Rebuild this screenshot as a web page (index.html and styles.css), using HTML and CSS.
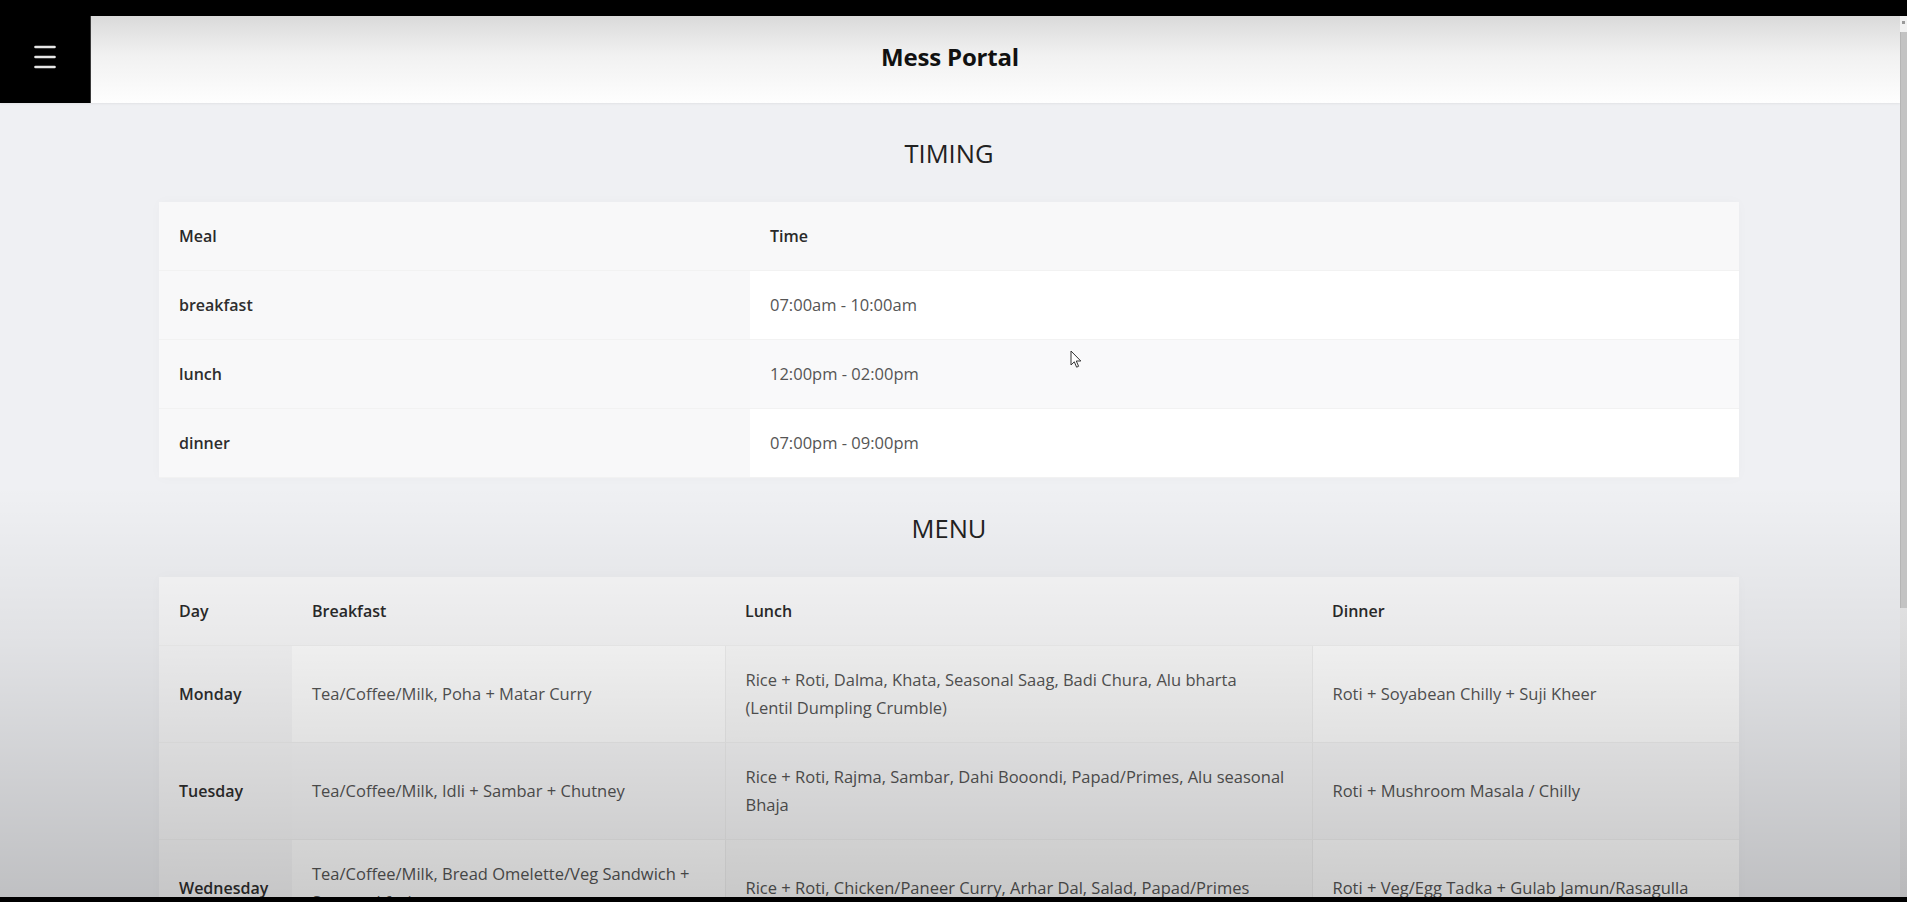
FILE: index.html
```html
<!DOCTYPE html>
<html lang="en">
<head>
<meta charset="utf-8">
<title>Mess Portal</title>
<link rel="stylesheet" href="styles.css">
</head>
<body>
<div class="screen">
  <div class="letterbox"></div>
  <div class="frame">
    <div class="page">
      <header class="app-header">
        <button class="menu-btn" aria-label="Menu">
          <svg width="22" height="24" viewBox="0 0 22 24"><g stroke="#e6e6e6" stroke-width="2.6" stroke-linecap="round"><line x1="1.5" y1="2" x2="20.5" y2="2"/><line x1="1.5" y1="12" x2="20.5" y2="12"/><line x1="1.5" y1="22" x2="20.5" y2="22"/></g></svg>
        </button>
        <h1 class="app-title">Mess Portal</h1>
        <span class="spacer"></span>
      </header>
      <main class="content">
        <h2 class="section-title">TIMING</h2>
        <table class="data-table timing">
          <thead>
            <tr><th class="c-meal">Meal</th><th>Time</th></tr>
          </thead>
          <tbody>
            <tr><th>breakfast</th><td>07:00am - 10:00am</td></tr>
            <tr class="alt"><th>lunch</th><td>12:00pm - 02:00pm</td></tr>
            <tr><th>dinner</th><td>07:00pm - 09:00pm</td></tr>
          </tbody>
        </table>
        <h2 class="section-title">MENU</h2>
        <table class="data-table menu">
          <thead>
            <tr><th class="c-day">Day</th><th class="c-bf">Breakfast</th><th class="c-lunch">Lunch</th><th>Dinner</th></tr>
          </thead>
          <tbody>
            <tr><th>Monday</th><td>Tea/Coffee/Milk, Poha + Matar Curry</td><td class="shade-col">Rice + Roti, Dalma, Khata, Seasonal Saag, Badi Chura, Alu bharta<br>(Lentil Dumpling Crumble)</td><td>Roti + Soyabean Chilly + Suji Kheer</td></tr>
            <tr class="alt"><th>Tuesday</th><td>Tea/Coffee/Milk, Idli + Sambar + Chutney</td><td class="shade-col">Rice + Roti, Rajma, Sambar, Dahi Booondi, Papad/Primes, Alu seasonal<br>Bhaja</td><td>Roti + Mushroom Masala / Chilly</td></tr>
            <tr><th>Wednesday</th><td>Tea/Coffee/Milk, Bread Omelette/Veg Sandwich +<br>Seasonal fruit</td><td class="shade-col">Rice + Roti, Chicken/Paneer Curry, Arhar Dal, Salad, Papad/Primes</td><td>Roti + Veg/Egg Tadka + Gulab Jamun/Rasagulla</td></tr>
          </tbody>
        </table>
      </main>
      <svg class="cursor" width="12" height="19" viewBox="0 0 12 19"><path d="M1 1 L1 15 L4.3 11.8 L6.6 17.2 L8.6 16.3 L6.3 11 L10.8 11 Z" fill="#fff" stroke="#333" stroke-width="1" stroke-linejoin="round"/></svg>
      <div class="video-shade"></div>
    </div>
    <div class="scrollbar">
      <span class="scroll-arrow"></span>
      <div class="scroll-thumb"></div>
    </div>
  </div>
  <div class="letterbox bottom"></div>
</div>
</body>
</html>
```

FILE: styles.css
```css
* { box-sizing: border-box; }

html, body {
  margin: 0;
  padding: 0;
  height: 100%;
  background: #000;
}

body {
  font-family: "Open Sans", "Noto Sans", sans-serif;
  color: #333;
}

.screen {
  display: flex;
  flex-direction: column;
  height: 902px;
  overflow: hidden;
}

.letterbox {
  height: 16px;
  flex: none;
  background: #000;
}

.letterbox.bottom {
  height: 5px;
}

.frame {
  flex: 1;
  display: flex;
  min-height: 0;
}

.page {
  flex: 1;
  position: relative;
  overflow: hidden;
  background: #eff0f3;
}

.app-header {
  display: grid;
  grid-template-columns: 91px 1fr 91px;
  align-items: center;
  height: 87px;
  background: linear-gradient(#dadada, #f1f1f1 45%, #fefefe);
  box-shadow: 0 1px 2px rgba(0, 0, 0, 0.06);
}

.menu-btn {
  height: 87px;
  border: 0;
  padding: 0 0 5px;
  background: #000;
  display: flex;
  align-items: center;
  justify-content: center;
  border-right: 1px solid #3a3a3a;
}

.app-title {
  margin: 0;
  text-align: center;
  font-size: 24px;
  font-weight: 700;
  color: #111;
  letter-spacing: -0.2px;
  padding-bottom: 6px;
}

.content {
  padding: 0 161px 0 159px;
}

.section-title {
  margin: 34px 0 33px;
  text-align: center;
  font-size: 25.5px;
  line-height: 32px;
  font-weight: 500;
  color: #222;
}

.data-table {
  width: 100%;
  border-collapse: collapse;
  table-layout: fixed;
  background: #fff;
  box-shadow: 0 0 12px rgba(0, 0, 0, 0.025);
  font-size: 16.5px;
  line-height: 28px;
}

.data-table th,
.data-table td {
  padding: 20px 20px;
  text-align: left;
  vertical-align: middle;
  border-bottom: 1px solid #f2f2f2;
}

.data-table th {
  font-size: 16px;
}

.data-table thead th {
  background: #f8f8f9;
  font-weight: 600;
  color: #2a2a2a;
}

.data-table tbody th {
  background: #f8f8f9;
  font-weight: 600;
  color: #2e2e2e;
}

.data-table td {
  color: #555;
}

.data-table tr.alt td {
  background: #f9f9fa;
}

.timing .c-meal { width: 591px; }

.menu .c-day { width: 133px; }
.menu .c-bf { width: 433px; }
.menu .c-lunch { width: 587px; }
.menu td.shade-col { background: #fbfbfb; border-left: 1px solid #f0f0f0; border-right: 1px solid #f0f0f0; }

.cursor {
  position: absolute;
  left: 1070px;
  top: 334px;
}

.video-shade {
  position: absolute;
  inset: 0;
  pointer-events: none;
  background: linear-gradient(to bottom, rgba(0,0,0,0) 0, rgba(0,0,0,0) 470px, rgba(0,0,0,0.06) 620px, rgba(0,0,0,0.2) 100%);
}

.scrollbar {
  width: 7px;
  flex: none;
  display: flex;
  flex-direction: column;
  align-items: stretch;
  background: linear-gradient(to bottom, #f1f1f1 0, #eeeeee 55%, #b9b9bb 100%);
  padding-top: 5px;
}

.scroll-arrow {
  height: 3px;
  margin: 0 2px;
  background: #9a9a9a;
}

.scroll-thumb {
  margin-top: 8px;
  height: 576px;
  background: #c3c3c3;
  border-left: 1px solid #b5b5b5;
}
```
